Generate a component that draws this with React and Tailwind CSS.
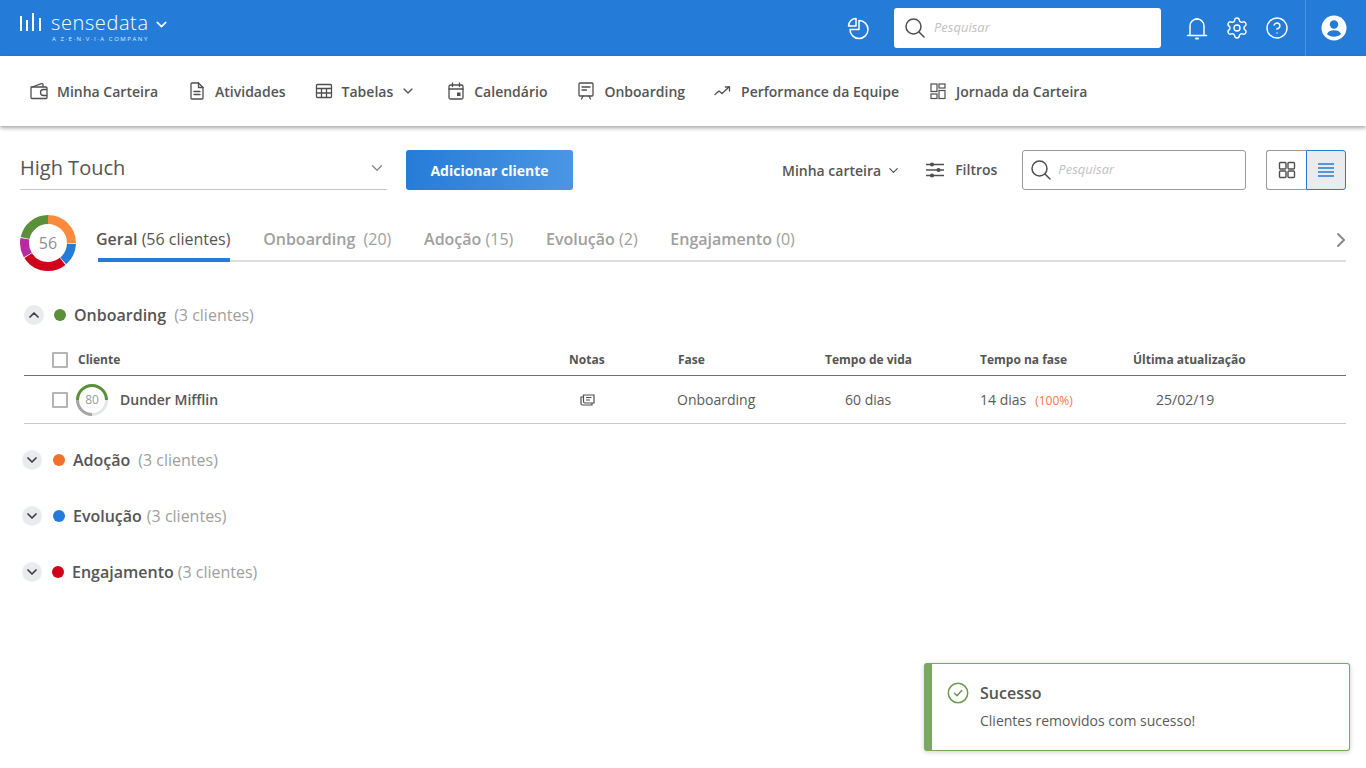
import React from "react";
import { ChevronDown, ChevronRight, ChevronUp, CircleHelp, Settings } from "lucide-react";

const GRAY = "#4f4f4f";

function WalletIcon() {
    return (
        <svg width="18" height="18" viewBox="0 0 18 18" fill="none" stroke={GRAY} strokeWidth="1.3" strokeLinejoin="round">
            <path d="M1 5h15a1 1 0 0 1 1 1v9.500a1 1 0 0 1-1 1H2a1 1 0 0 1-1-1z" />
            <path d="M2 5l9.500-3.300a1 1 0 0 1 1.500.9V5" />
            <path d="M17 7.500h-3.500a3 3 0 0 0 0 6H17" />
        </svg>
    );
}

function FileIcon() {
    return (
        <svg width="18" height="18" viewBox="0 0 18 18" fill="none" stroke={GRAY} strokeWidth="1.3" strokeLinejoin="round" strokeLinecap="round">
            <path d="M3 2a1 1 0 0 1 1-1h6.500L15 5.500V16a1 1 0 0 1-1 1H4a1 1 0 0 1-1-1z" />
            <path d="M10.500 1v4.500H15" />
            <path d="M6 9.500h6M6 12.500h6" />
        </svg>
    );
}

function TableIcon() {
    return (
        <svg width="18" height="18" viewBox="0 0 18 18" fill="none" stroke={GRAY} strokeWidth="1.3">
            <rect x="1.500" y="2.500" width="15" height="13" rx="1" />
            <path d="M1.500 6.500h15M1.500 11h15M6.500 6.500v9M11.500 6.500v9" />
        </svg>
    );
}

function CalendarIcon() {
    return (
        <svg width="18" height="18" viewBox="0 0 18 18" fill="none" stroke={GRAY} strokeWidth="1.3" strokeLinecap="round">
            <rect x="2" y="3" width="14" height="14" rx="1.500" />
            <path d="M2 7h14M5.500 1v3.500M12.500 1v3.500" />
            <rect x="10" y="10.500" width="3.500" height="3.500" fill={GRAY} stroke="none" />
        </svg>
    );
}

function BoardIcon() {
    return (
        <svg width="18" height="18" viewBox="0 0 18 18" fill="none" stroke={GRAY} strokeWidth="1.3" strokeLinecap="round">
            <rect x="2" y="1" width="14" height="13" rx="1" />
            <path d="M5 5h8M5 8h4.500M6 14l-1.500 3M12 14l1.500 3" />
        </svg>
    );
}

function TrendIcon() {
    return (
        <svg width="18" height="18" viewBox="0 0 18 18" fill="none" stroke={GRAY} strokeWidth="1.3" strokeLinecap="round" strokeLinejoin="round">
            <path d="M1 12.500l4-3.500 3 2.500 7-6.500" />
            <path d="M11.500 5h4v4" />
        </svg>
    );
}

function JourneyIcon() {
    return (
        <svg width="18" height="18" viewBox="0 0 18 18" fill="none" stroke={GRAY} strokeWidth="1.2">
            <rect x="2" y="2" width="6" height="7.500" />
            <rect x="10" y="2" width="6" height="4" />
            <rect x="2" y="12" width="6" height="4.500" />
            <rect x="10" y="8.500" width="6" height="8" />
        </svg>
    );
}

function PieIcon() {
    return (
        <svg width="24" height="24" viewBox="0 0 24 24" fill="none" stroke="#fff" strokeWidth="1.500" strokeLinejoin="round" className="ml-[676px]">
            <path d="M10 2.500a7.500 7.500 0 0 0-7.500 7.500H10z" />
            <path d="M13 4.500a9 9 0 1 1-9 9h9z" />
        </svg>
    );
}

function BellIcon() {
    return (
        <svg width="24" height="24" viewBox="0 0 24 24" fill="none" stroke="#fff" strokeWidth="1.500" strokeLinecap="round" strokeLinejoin="round">
            <path d="M5 19V10a7 7 0 0 1 14 0v9" />
            <path d="M2.500 19.500h19" />
            <path d="M11 3h2" />
            <path d="M11 22.500h2" strokeWidth="2" />
        </svg>
    );
}

function SearchIcon() {
    return (
        <svg width="20" height="20" viewBox="0 0 20 20" fill="none" stroke={GRAY} strokeWidth="1.500" strokeLinecap="round">
            <circle cx="8.500" cy="8.500" r="7.500" />
            <path d="M14 14l5 5" />
        </svg>
    );
}

function UserIcon() {
    return (
        <svg width="26" height="26" viewBox="0 0 26 26">
            <circle cx="13" cy="13" r="12.500" fill="#fff" />
            <circle cx="13" cy="9.500" r="4.200" fill="#257cd8" />
            <path d="M6 19c1-2.800 3.800-3.800 7-3.800s6 1 7 3.800c-1.700 1.800-4.200 2.800-7 2.800s-5.300-1-7-2.800z" fill="#257cd8" />
        </svg>
    );
}

function SlidersIcon() {
    return (
        <svg width="18" height="18" viewBox="0 0 18 18" fill={GRAY} stroke={GRAY} strokeWidth="1.600">
            <path d="M0 3.500h18M0 9h18M0 14.500h18" />
            <circle cx="6" cy="3.500" r="1.300" />
            <circle cx="12.500" cy="9" r="1.300" />
            <circle cx="6" cy="14.500" r="1.300" />
        </svg>
    );
}

function GridIcon() {
    return (
        <svg width="18" height="18" viewBox="0 0 18 18" fill="none" stroke={GRAY} strokeWidth="1.400">
            <rect x="1.500" y="1.500" width="6.500" height="6.500" rx="1" />
            <rect x="10" y="1.500" width="6.500" height="6.500" rx="1" />
            <rect x="1.500" y="10" width="6.500" height="6.500" rx="1" />
            <rect x="10" y="10" width="6.500" height="6.500" rx="1" />
        </svg>
    );
}

function NoteIcon() {
    return (
        <svg width="15" height="12" viewBox="0 0 15 12" fill="none" stroke={GRAY} strokeWidth="1.200">
            <path d="M3.500 1h10.500v8H5a1.500 1.500 0 0 1-1.500-1.500z" />
            <path d="M3.500 3H1v6.500A1.500 1.500 0 0 0 2.500 11H12V9" />
            <path d="M6 3.500h5.500M6 6h4" />
        </svg>
    );
}

function SuccessIcon() {
    return (
        <svg width="22" height="22" viewBox="0 0 22 22" fill="none" stroke="#6b9b50" strokeWidth="1.500" strokeLinecap="round" strokeLinejoin="round">
            <circle cx="11" cy="11" r="9.700" />
            <path d="M7.500 11.300l2.500 2.500 4.700-5.300" />
        </svg>
    );
}

// Segmented ring, fractions measured clockwise from the top
function Donut() {
    const r = 23.5;
    const c = 2 * Math.PI * r;
    const parts = [
        { color: "#fb8a3c", from: 0, to: 0.25 },
        { color: "#257cd8", from: 0.255, to: 0.385 },
        { color: "#d0021b", from: 0.39, to: 0.655 },
        { color: "#b52ba3", from: 0.66, to: 0.775 },
        { color: "#5b8f3a", from: 0.78, to: 0.995 },
    ];
    return (
        <div className="relative w-[56px] h-[56px] shrink-0">
            <svg width="56" height="56" viewBox="0 0 56 56" className="-rotate-90">
                {parts.map((p) => (
                    <circle
                        key={p.color}
                        cx="28"
                        cy="28"
                        r={r}
                        fill="none"
                        stroke={p.color}
                        strokeWidth="9"
                        strokeDasharray={`${(p.to - p.from) * c} ${c}`}
                        strokeDashoffset={-p.from * c}
                    />
                ))}
            </svg>
            <span className="absolute inset-0 flex items-center justify-center text-[16px] text-[#8f8f8f]">56</span>
        </div>
    );
}

function ScoreRing() {
    return (
        <div className="relative w-[32px] h-[32px] shrink-0">
            <svg width="32" height="32" viewBox="0 0 32 32" fill="none" strokeWidth="3">
                <circle cx="16" cy="16" r="14.500" stroke="#e4e6e8" />
                <path d="M1.500 16A14.500 14.500 0 0 1 30.500 16" stroke="#5b8f3a" />
                <path d="M1.500 16A14.500 14.500 0 0 0 16 30.500" stroke="#a6a6a6" />
            </svg>
            <span className="absolute inset-0 flex items-center justify-center text-[12px] text-[#9a9a9a]">80</span>
        </div>
    );
}

function Checkbox() {
    return <span className="block w-[16px] h-[16px] border-2 border-[#b4b4b4] rounded-[1px] shrink-0" />;
}

function NavItem({ icon, label, caret, className = "" }) {
    return (
        <div className={`flex items-center gap-[9px] text-[14px] font-semibold text-[#555555] ${className}`}>
            {icon}
            <span>{label}</span>
            {caret && <ChevronDown size={16} strokeWidth={2} className="-ml-[2px]" />}
        </div>
    );
}

function Tab({ name, count, active, spacer = " " }) {
    return (
        <div className={`h-[47px] pt-[13px] text-[16px] leading-[22px] ${active ? "text-[#555555] border-b-[4px] border-[#257cd8]" : "text-[#a0a0a0]"}`}>
            <span className={`block whitespace-pre ${active ? "-ml-[2px]" : ""}`}>
                <span className="font-semibold">{name}</span>
                {spacer}
                {count}
            </span>
        </div>
    );
}

function PhaseRow({ color, name, count, dotGap = 11, mt, gap }) {
    return (
        <div className={`flex items-center h-[22px] pl-[22px] ${mt}`}>
            <span className="w-[20px] h-[20px] rounded-full bg-[#e9ebee] flex items-center justify-center">
                <ChevronDown size={16} strokeWidth={2.6} color="#3f3f3f" />
            </span>
            <span
                className="w-[12px] h-[12px] rounded-full"
                style={{ backgroundColor: color, marginLeft: dotGap }}
            />
            <span className="ml-[8px] text-[16px] font-semibold text-[#555555]">{name}</span>
            <span className={`${gap} text-[16px] text-[#a0a0a0]`}>{count}</span>
        </div>
    );
}

export default function App() {
    return (
        <div className="relative w-[1366px] h-[768px] overflow-hidden bg-white font-['Open_Sans',sans-serif]">
            {/* top bar */}
            <header className="h-[56px] bg-[#257cd8] flex items-center pl-[20px]">
                <div className="flex items-start text-white w-[150px]">
                    <svg width="23" height="20" viewBox="0 0 23 20" stroke="#fff" strokeWidth="2" className="-mt-[2px]">
                        <path d="M1 5v15M7 9v11M13 2v18M20 7v13" />
                    </svg>
                    <div className="ml-[8px] -mt-[3px] flex flex-col">
                        <span className="text-[20px] leading-[26px] font-light tracking-[0.6px]">sensedata</span>
                        <span className="text-[6px] leading-[8px] tracking-[1.55px] ml-[1px] -mt-[1px] text-[#dcebfa]">A Z·E·N·V·I·A COMPANY</span>
                    </div>
                    <ChevronDown size={17} strokeWidth={2.2} className="ml-[4px] mt-[3px]" />
                </div>
                <PieIcon />
                <div className="ml-[24px] w-[267px] h-[40px] bg-white rounded-[3px] flex items-center pl-[11px]">
                    <SearchIcon />
                    <span className="ml-[9px] text-[13px] italic text-[#c2c2c2]">Pesquisar</span>
                </div>
                <span className="ml-[24px]"><BellIcon /></span>
                <Settings size={24} strokeWidth={1.4} color="#fff" className="ml-[16px]" />
                <CircleHelp size={24} strokeWidth={1.4} color="#fff" className="ml-[16px]" />
                <div className="ml-[16px] h-[56px] border-l border-[#4a93e0] pl-[15px] flex items-center">
                    <UserIcon />
                </div>
            </header>

            {/* nav */}
            <nav className="h-[70px] flex items-center pl-[30px] bg-white shadow-[0_2px_4px_rgba(0,0,0,0.35)]">
                <NavItem icon={<WalletIcon />} label="Minha Carteira" />
                <NavItem className="ml-[30px]" icon={<FileIcon />} label="Atividades" />
                <NavItem className="ml-[29px]" icon={<TableIcon />} label="Tabelas" caret />
                <NavItem className="ml-[31px]" icon={<CalendarIcon />} label="Calendário" />
                <NavItem className="ml-[30px]" icon={<BoardIcon />} label="Onboarding" />
                <NavItem className="ml-[29px]" icon={<TrendIcon />} label="Performance da Equipe" />
                <NavItem className="ml-[30px]" icon={<JourneyIcon />} label="Jornada da Carteira" />
            </nav>

            {/* toolbar */}
            <div className="flex items-center h-[40px] mt-[24px] pl-[20px]">
                <div className="w-[367px] h-[40px] border-b border-[#c8c8c8] flex items-center justify-between pr-[1px] pb-[4px]">
                    <span className="text-[20px] text-[#555555]">High Touch</span>
                    <ChevronDown size={18} strokeWidth={1.8} color="#8a8a8a" />
                </div>
                <button className="ml-[19px] w-[167px] h-[40px] rounded-[3px] bg-gradient-to-r from-[#257cd8] to-[#4a96e4] text-white text-[14px] font-bold">
                    Adicionar cliente
                </button>
                <span className="ml-[209px] text-[14px] font-semibold text-[#555555]">Minha carteira</span>
                <ChevronDown size={15} strokeWidth={1.8} color={GRAY} className="ml-[5px]" />
                <span className="ml-[25px]"><SlidersIcon /></span>
                <span className="ml-[11px] -mt-[2px] text-[14px] font-semibold text-[#555555]">Filtros</span>
                <div className="ml-[25px] w-[224px] h-[40px] border border-[#9a9a9a] rounded-[3px] flex items-center pl-[8px]">
                    <SearchIcon />
                    <span className="ml-[7px] text-[13px] italic text-[#c2c2c2]">Pesquisar</span>
                </div>
                <div className="ml-[20px] flex h-[40px]">
                    <div className="w-[40px] border border-r-0 border-[#9a9a9a] rounded-l-[3px] flex items-center justify-center">
                        <GridIcon />
                    </div>
                    <div className="w-[40px] border border-[#257cd8] rounded-r-[3px] bg-[#e9ebee] flex items-center justify-center">
                        <svg width="16" height="14" viewBox="0 0 16 14" stroke="#257cd8" strokeWidth="1.500">
                            <path d="M0 1h16M0 5h16M0 9h16M0 13h16" />
                        </svg>
                    </div>
                </div>
            </div>

            {/* tabs */}
            <div className="flex items-start h-[56px] mt-[25px] pl-[20px] pr-[20px]">
                <Donut />
                <div className="ml-[22px] flex-1 h-[45px] flex items-start gap-[32.75px] border-b-2 border-[#dedede] box-content">
                    <Tab name="Geral" count="(56 clientes)" active />
                    <Tab name="Onboarding" count="(20)" spacer="  " />
                    <Tab name="Adoção" count="(15)" />
                    <Tab name="Evolução" count="(2)" />
                    <Tab name="Engajamento" count="(0)" />
                    <ChevronRight size={24} strokeWidth={2} color="#8a8a8a" className="ml-auto -mr-[7px] mt-[13px]" />
                </div>
            </div>

            {/* onboarding group */}
            <div className="mt-[33px] pl-[24px] pr-[20px]">
                <div className="flex items-center h-[22px]">
                    <span className="w-[20px] h-[20px] rounded-full bg-[#e9ebee] flex items-center justify-center">
                        <ChevronUp size={16} strokeWidth={2.6} color="#3f3f3f" />
                    </span>
                    <span className="w-[12px] h-[12px] rounded-full bg-[#5b8f3a] ml-[10px]" />
                    <span className="ml-[8px] text-[16px] font-semibold text-[#555555]">Onboarding</span>
                    <span className="ml-[8px] text-[16px] text-[#a0a0a0]">(3 clientes)</span>
                </div>

                <div className="mt-[24px] pb-[5px] border-b border-[#6f6f6f] grid grid-cols-[517px_108px_148px_155px_153px_1fr] pl-[28px] items-center text-[12px] leading-[20px] font-bold text-[#555555]">
                    <div className="flex items-center gap-[10px]">
                        <Checkbox />
                        <span>Cliente</span>
                    </div>
                    <span>Notas</span>
                    <span className="pl-[1px]">Fase</span>
                    <span>Tempo de vida</span>
                    <span>Tempo na fase</span>
                    <span>Última atualização</span>
                </div>

                <div className="h-[48px] border-b border-[#c8c8c8] grid grid-cols-[517px_108px_148px_155px_153px_1fr] pl-[28px] items-center text-[14px] text-[#5a5a5a]">
                    <div className="flex items-center">
                        <Checkbox />
                        <span className="ml-[8px]"><ScoreRing /></span>
                        <span className="ml-[12px] font-semibold text-[#555555]">Dunder Mifflin</span>
                    </div>
                    <span className="pl-[11px]"><NoteIcon /></span>
                    <span>Onboarding</span>
                    <span className="pl-[20px]">60 dias</span>
                    <span>
                        14 dias<span className="ml-[9px] text-[12px] text-[#f07a3a]">(100%)</span>
                    </span>
                    <span className="pl-[23px]">25/02/19</span>
                </div>
            </div>

            <PhaseRow color="#f0702d" name="Adoção" count="(3 clientes)" mt="mt-[25px]" gap="ml-[8px]" />
            <PhaseRow color="#257cd8" name="Evolução" count="(3 clientes)" mt="mt-[34px]" gap="ml-[5px]" />
            <PhaseRow color="#d0021b" name="Engajamento" count="(3 clientes)" dotGap={10} mt="mt-[34px]" gap="ml-[4px]" />

            {/* toast */}
            <div className="absolute left-[924px] top-[663px] w-[426px] h-[88px] bg-white border border-[#7aa860] border-l-[8px] rounded-[3px] shadow-[0_1px_5px_rgba(0,0,0,0.2)] flex">
                <span className="ml-[15px] mt-[18px]"><SuccessIcon /></span>
                <div className="ml-[11px] mt-[17px]">
                    <div className="text-[16px] leading-[24px] font-semibold text-[#555555]">Sucesso</div>
                    <div className="mt-[6px] text-[14px] leading-[20px] text-[#5a5a5a]">Clientes removidos com sucesso!</div>
                </div>
            </div>
        </div>
    );
}
